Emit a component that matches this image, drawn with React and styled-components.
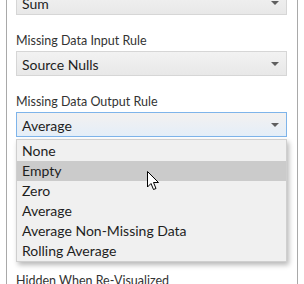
import React from 'react';
import styled, { createGlobalStyle, css } from 'styled-components';

const GlobalStyle = createGlobalStyle`
  html, body {
    margin: 0;
    padding: 0;
    background: #ffffff;
    overflow: hidden;
  }
  body {
    font-family: Lato, "Noto Sans", sans-serif;
    color: #1e1e1e;
  }
`;

const Panel = styled.div`
  margin: -10px 0 0 6px;
  width: 292px;
  height: 320px;
  border-left: 1px solid #a9a9a9;
  border-right: 1px solid #a9a9a9;
  padding: 0 10px 0 9px;
  box-sizing: border-box;
  display: flex;
  flex-direction: column;
`;

const Field = styled.div`
  display: flex;
  flex-direction: column;
  gap: 2px;
  margin-bottom: ${({ $after }) => $after || 18}px;
  position: relative;
`;

const Label = styled.div`
  font-size: 12.5px;
  line-height: 16px;
  color: #333333;
  white-space: nowrap;
`;

const Select = styled.div`
  height: 25px;
  box-sizing: border-box;
  border: 1px solid #d6d6d6;
  background: linear-gradient(#f2f2f2, #e8e8e8);
  display: flex;
  align-items: center;
  justify-content: space-between;
  padding: 1px 7px 0 5px;
  font-size: 14px;
  color: #1e1e1e;

  ${({ $active }) =>
    $active &&
    css`
      border-color: #7eb4ea;
      background: linear-gradient(#f3f1f0, #e4eef8);
    `}
`;

const Arrow = styled.span`
  width: 0;
  height: 0;
  border-left: 4px solid transparent;
  border-right: 4px solid transparent;
  border-top: 4px solid #5f5f5f;
`;

const List = styled.div`
  position: absolute;
  left: 0;
  right: 0;
  top: calc(100% + 2px);
  background: #f0f0f0;
  border: 1px solid #cfcfcf;
  box-shadow: 2px 3px 5px rgba(0, 0, 0, 0.28);
  padding: 1px 0 0;
  z-index: 2;
`;

const Item = styled.div`
  height: 20px;
  line-height: 20px;
  padding-left: 5px;
  font-size: 14px;
  color: #1e1e1e;
  white-space: nowrap;
  background: ${({ $hover }) => ($hover ? '#cbcbcb' : 'transparent')};
`;

const Pointer = styled.svg`
  position: absolute;
  left: 131px;
  top: 77px;
  z-index: 3;
`;

const options = ['None', 'Empty', 'Zero', 'Average', 'Average Non-Missing Data', 'Rolling Average'];

export default function App() {
  return (
    <>
      <GlobalStyle />
      <Panel>
        <Field>
          <Select>
            <span>Sum</span>
            <Arrow />
          </Select>
        </Field>
        <Field>
          <Label>Missing Data Input Rule</Label>
          <Select>
            <span>Source Nulls</span>
            <Arrow />
          </Select>
        </Field>
        <Field $after={136}>
          <Label>Missing Data Output Rule</Label>
          <Select $active>
            <span>Average</span>
            <Arrow />
          </Select>
          <List>
            {options.map((o) => (
              <Item key={o} $hover={o === 'Empty'}>
                {o}
              </Item>
            ))}
          </List>
          <Pointer width="13" height="20" viewBox="0 0 13 20">
            <path
              d="M0.5 0.5 L0.5 16 L4 12.5 L6.5 18.5 L9 17.5 L6.5 11.5 L11.5 11.5 Z"
              fill="#ffffff"
              stroke="#000000"
              strokeWidth="1"
              strokeLinejoin="round"
            />
          </Pointer>
        </Field>
        <Label>Hidden When Re-Visualized</Label>
      </Panel>
    </>
  );
}
